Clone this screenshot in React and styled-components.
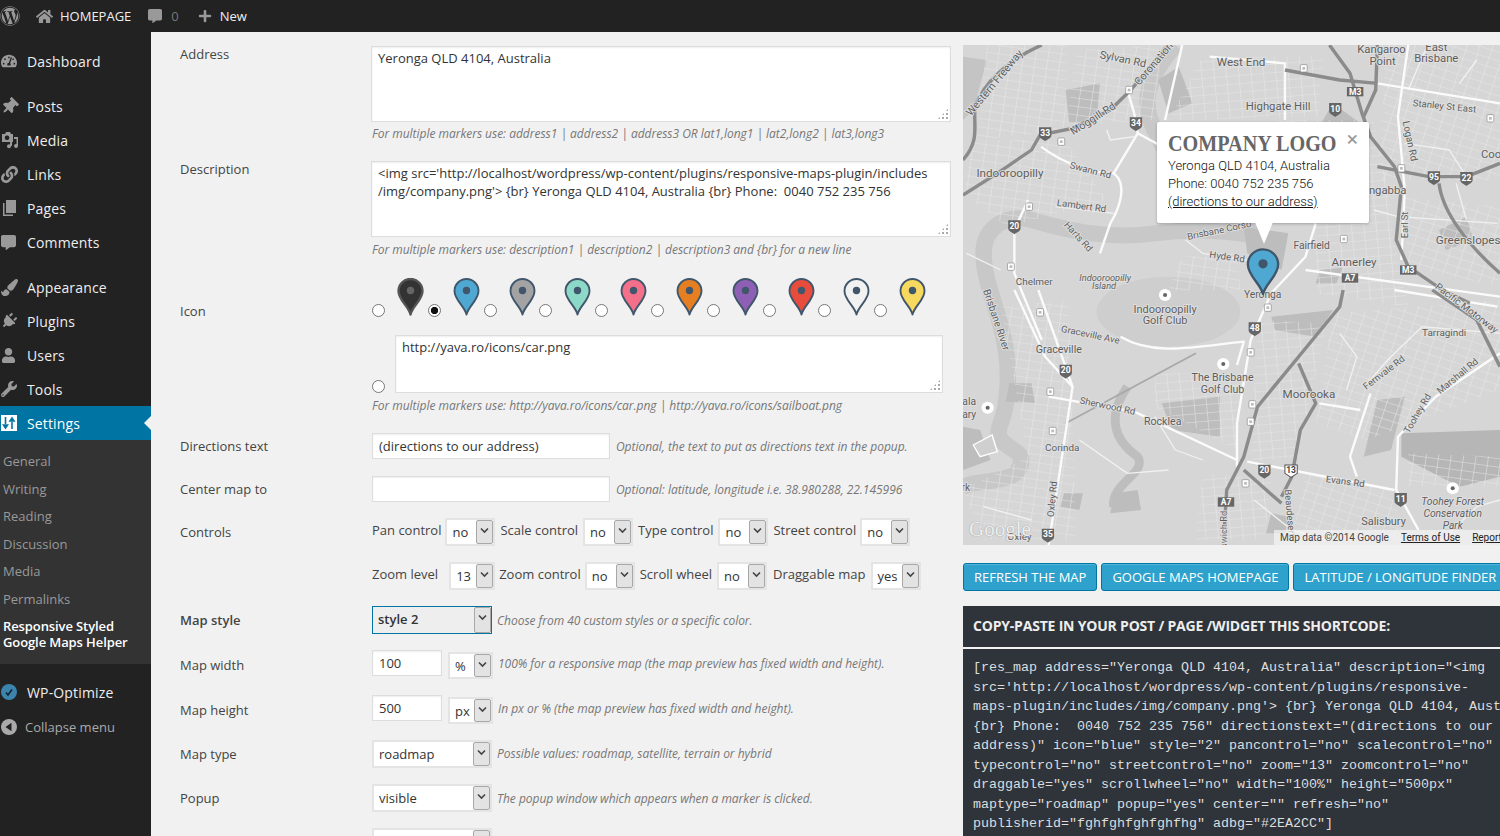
import React from "react";
import styled, { createGlobalStyle } from "styled-components";
import {
  FaWordpress, FaHome, FaCommentAlt, FaPlus, FaTachometerAlt, FaThumbtack, FaLink,
  FaPaintBrush, FaPlug, FaUser, FaWrench,
} from "react-icons/fa";

const GlobalStyle = createGlobalStyle`
  html, body { margin: 0; height: 100%; overflow: hidden; background: #f1f1f1; }
  body { font-family: "Open Sans", sans-serif; font-size: 13px; color: #444; }
  * { box-sizing: border-box; }
`;

const Page = styled.div`
  width: 1500px;
  height: 836px;
  overflow: hidden;
  display: flex;
  flex-direction: column;
`;

/* admin bar */
const AdminBar = styled.div`
  height: 32px;
  flex: none;
  background: #222;
  display: flex;
  align-items: center;
  color: #eee;
  font-size: 13px;
`;

const BarIcon = styled.span`
  display: flex;
  align-items: center;
  color: #999;
  margin-left: ${({ $ml }) => $ml}px;
`;

const BarText = styled.span`
  margin-left: ${({ $ml }) => $ml}px;
  color: ${({ $dim }) => ($dim ? "#777" : "#eee")};
`;

const Body = styled.div`
  flex: 1;
  display: flex;
  min-height: 0;
`;

/* side menu */
const Sidebar = styled.nav`
  width: 151px;
  flex: none;
  background: #222;
  padding-top: 12px;
`;

const MenuGroup = styled.div`
  margin-bottom: 11px;
`;

const MenuItem = styled.div`
  position: relative;
  height: 34px;
  display: flex;
  align-items: center;
  color: ${({ $active }) => ($active ? "#fff" : "#eee")};
  background: ${({ $active }) => ($active ? "#0074a2" : "transparent")};
  font-size: 14px;
  letter-spacing: 0.15px;
`;

const MenuIcon = styled.span`
  width: 27px;
  flex: none;
  display: flex;
  align-items: center;
  padding-left: 1px;
  color: #999;
`;

const ActiveArrow = styled.span`
  position: absolute;
  right: 0;
  top: 10px;
  border: 7px solid transparent;
  border-right-color: #f1f1f1;
  border-left-width: 0;
`;

const SubMenu = styled.div`
  background: #333;
  height: 224px;
  padding: 7px 0 0 3px;
`;

const SubItem = styled.div`
  height: 27.5px;
  line-height: 28px;
  color: #999;
  font-size: 13px;
`;

const SubCurrent = styled.div`
  margin-top: 6px;
  color: #fff;
  font-weight: 600;
  font-size: 13px;
  line-height: 16px;
  letter-spacing: -0.1px;
`;

const CollapseItem = styled(MenuItem)`
  color: #aaa;
  font-size: 13px;
  letter-spacing: 0;
  height: 35px;
`;

const CollapseIcon = styled(MenuIcon)`
  width: 25px;
`;

/* form column */
const Content = styled.main`
  flex: 1;
  display: flex;
  gap: 12px;
  padding: 14px 0 0 29px;
  min-width: 0;
`;

const Form = styled.div`
  width: 771px;
  flex: none;
`;

const Row = styled.div`
  display: grid;
  grid-template-columns: 192px 1fr;
  align-items: ${({ $center }) => ($center ? "center" : "start")};
  margin-top: ${({ $gap }) => $gap || 0}px;
`;

const Label = styled.div`
  color: #444;
  line-height: 18px;
  padding-top: ${({ $top }) => $top || 0}px;
  margin-top: ${({ $lift }) => ($lift ? "-1px" : 0)};
  font-weight: ${({ $bold }) => ($bold ? 600 : 400)};
`;

const Field = styled.div`
  display: flex;
  align-items: ${({ $top }) => ($top ? "flex-start" : "center")};
`;

const TextBox = styled.div`
  position: relative;
  margin-left: ${({ $ml }) => $ml || -1}px;
  width: ${({ $w }) => $w}px;
  height: ${({ $h }) => $h}px;
  background: #fff;
  border: 1px solid #ddd;
  box-shadow: inset 0 1px 2px rgba(0, 0, 0, 0.07);
  padding: 2px 6px;
  line-height: 18px;
  color: #333;
`;

const Grip = styled.span`
  position: absolute;
  right: 1px;
  bottom: 1px;
  width: 12px;
  height: 12px;
  background:
    radial-gradient(circle, #aaa 1px, transparent 1.2px) 0 0 / 4px 4px;
  clip-path: polygon(100% 0, 100% 100%, 0 100%);
`;

const Hint = styled.div`
  font-style: italic;
  font-size: 12px;
  line-height: 18px;
  color: #777;
  letter-spacing: -0.025px;
  margin-top: ${({ $mt }) => $mt}px;
  margin-left: ${({ $ml }) => $ml || 0}px;
  white-space: nowrap;
`;

const TextInput = styled.div`
  width: ${({ $w }) => $w}px;
  height: 26px;
  background: #fff;
  border: 1px solid #ddd;
  box-shadow: inset 0 1px 2px rgba(0, 0, 0, 0.07);
  padding: 0 6px;
  line-height: 24px;
  color: #333;
  flex: none;
`;

const SelectBox = styled.div`
  width: ${({ $w }) => $w}px;
  height: ${({ $h }) => $h}px;
  flex: none;
  display: flex;
  background: ${({ $focus }) => ($focus ? "#eee" : "#fff")};
  border: ${({ $focus }) => ($focus ? "1px solid #0074a2" : "2px solid #e4e4e4")};
  margin-left: ${({ $ml }) => $ml || 0}px;
  margin-top: ${({ $mt }) => $mt || 0}px;
  color: #333;
  font-weight: ${({ $focus }) => ($focus ? 600 : 400)};
`;

const SelectValue = styled.span`
  flex: 1;
  padding: 1px 0 0 5px;
  line-height: 22px;
`;

const SelectArrow = styled.span`
  width: 17px;
  flex: none;
  display: flex;
  justify-content: center;
  padding-top: 6px;
  background: #e3e3e3;
  border: 1px solid #a8a8a8;
  border-radius: 2px;
  color: #444;
`;

const Select = ({ w, h = 28, value, focus, ml, mt }) => (
  <SelectBox $w={w} $h={h} $focus={focus} $ml={ml} $mt={mt}>
    <SelectValue>{value}</SelectValue>
    <SelectArrow>
      <svg width="9" height="7" viewBox="0 0 9 7">
        <path d="M1 1.5 L4.5 5 L8 1.5" fill="none" stroke="currentColor" strokeWidth="1.6" />
      </svg>
    </SelectArrow>
  </SelectBox>
);

const Pins = styled.div`
  display: flex;
  height: 41px;
  align-items: flex-end;
`;

const PinOption = styled.div`
  width: 55.8px;
  flex: none;
  display: flex;
  align-items: flex-end;
  gap: 12px;
`;

const Radio = styled.input.attrs({ type: "radio", readOnly: true })`
  appearance: none;
  margin: 0;
  width: 13px;
  height: 13px;
  flex: none;
  border: 1px solid #777;
  border-radius: 50%;
  background: #fff;
  display: block;
  &:checked {
    background: radial-gradient(circle, #111 3.4px, #fff 3.9px);
  }
`;

const Pin = ({ fill, stroke = "#40566a", dot = "#40566a", w = 27, h = 38, soft }) => (
  <svg width={w} height={h} viewBox="0 0 27 38" style={{ flex: "none", marginBottom: 1 }}>
    <path
      d="M13.5 36.5 C11.5 28 1.5 22 1.5 13 A12 12 0 1 1 25.5 13 C25.5 22 15.5 28 13.5 36.5 Z"
      fill={fill}
      stroke={stroke}
      strokeWidth={soft ? 2.4 : 1.9}
      strokeLinejoin="round"
    />
    <circle cx="13.5" cy="12.5" r="3.7" fill={dot} />
  </svg>
);

const CustomIconRow = styled.div`
  display: flex;
  align-items: flex-end;
  margin-top: 18px;
  gap: 10px;
`;

const CustomBox = styled(TextBox)`
  margin-left: 0;
`;

const ControlRow = styled.div`
  display: flex;
  align-items: center;
  height: 28px;
  margin-bottom: ${({ $mb }) => $mb || 0}px;
`;

const ControlLabel = styled.span`
  margin-left: ${({ $ml }) => $ml || 0}px;
  margin-top: -4px;
  white-space: nowrap;
  color: #444;
`;

/* right column */
const Side = styled.div`
  flex: 1;
  min-width: 0;
  margin-top: -1px;
`;

const MapFrame = styled.div`
  position: relative;
  width: 537px;
  height: 500px;
  overflow: hidden;
  background: #ddd;
`;

const MapSvg = styled.svg`
  display: block;
  width: 537px;
  height: 500px;
`;

const MapLabel = styled.text`
  font-family: Roboto, sans-serif;
  font-size: ${({ $size }) => $size || 32}px;
  font-style: ${({ $italic }) => ($italic ? "italic" : "normal")};
  fill: #5e5e5e;
  stroke: #e2e2e2;
  stroke-width: 5px;
  paint-order: stroke;
  text-anchor: middle;
`;

const ShieldText = styled.text`
  font-family: Roboto, sans-serif;
  font-weight: 700;
  font-size: 25px;
  fill: ${({ $dark }) => ($dark ? "#444" : "#fff")};
  text-anchor: middle;
`;

const Popup = styled.div`
  position: absolute;
  left: 194px;
  top: 77px;
  width: 212px;
  height: 101px;
  background: #fff;
  border-radius: 2px;
  padding: 7px 11px;
  box-shadow: 0 1px 3px rgba(0, 0, 0, 0.25);
  font-family: Roboto, sans-serif;
  font-weight: 300;
  font-size: 13px;
  line-height: 18px;
  color: #111;
  &::after {
    content: "";
    position: absolute;
    left: 98px;
    top: 100px;
    border-style: solid;
    border-width: 22px 9px 0;
    border-color: #fff transparent transparent;
  }
`;

const PopupLogo = styled.div`
  font-family: "Liberation Serif", serif;
  font-weight: 700;
  font-size: 24px;
  line-height: 28px;
  color: #666;
  white-space: nowrap;
  transform: scaleX(0.84);
  transform-origin: left center;
`;

const PopupClose = styled.span`
  position: absolute;
  right: 11px;
  top: 8px;
  color: #999;
  font-size: 21px;
  line-height: 18px;
  font-weight: 400;
`;

const PopupLink = styled.div`
  text-decoration: underline;
`;

const MapPin = styled.div`
  position: absolute;
  left: 283px;
  top: 203px;
  line-height: 0;
`;

const GoogleMark = styled.span`
  position: absolute;
  left: 6px;
  bottom: 3px;
  font-family: "Liberation Serif", serif;
  font-size: 21px;
  color: rgba(255, 255, 255, 0.9);
  text-shadow: 0 0 1px #777;
`;

const Attribution = styled.div`
  position: absolute;
  right: 0;
  bottom: 0;
  width: 226px;
  height: 15px;
  padding-left: 6px;
  display: flex;
  gap: 12px;
  background: rgba(245, 245, 245, 0.7);
  font-family: Roboto, sans-serif;
  font-size: 10px;
  line-height: 15px;
  color: #444;
  white-space: nowrap;
`;

const AttributionLink = styled.span`
  color: #222;
  text-decoration: underline;
`;

const Buttons = styled.div`
  display: flex;
  gap: 4px;
  margin-top: 18px;
  white-space: nowrap;
`;

const Button = styled.div`
  height: 28px;
  padding: 0 10px;
  background: #2ea2cc;
  border: 1px solid #0074a2;
  border-radius: 3px;
  box-shadow: inset 0 1px 0 rgba(120, 200, 230, 0.5);
  color: #fff;
  font-size: 13px;
  line-height: 26px;
  flex: none;
`;

const ShortcodeHead = styled.div`
  margin-top: 15px;
  height: 41px;
  background: #2f343b;
  padding-left: 10px;
  color: #eee;
  font-weight: 700;
  font-size: 14px;
  letter-spacing: -0.2px;
  line-height: 40px;
  white-space: nowrap;
`;

const ShortcodeBody = styled.div`
  margin-top: 2px;
  height: 200px;
  background: #2f343b;
  padding: 9px 0 0 10px;
  color: #ddd;
  font-family: "Liberation Mono", monospace;
  font-size: 13.333px;
  line-height: 19.5px;
  white-space: pre;
  overflow: hidden;
`;

/* map data, in zoomed picture units (1568 x 1500 viewBox) */
const patches = [
  "300,150 400,130 390,240 310,250", "570,120 630,80 670,190 600,220",
  "1080,190 1160,250 1090,330 1040,260", "820,560 950,580 930,690 830,640",
  "900,830 1080,810 1030,890 910,870", "1210,1080 1290,1070 1250,1230 1170,1250",
  "135,1030 200,1030 210,1090 125,1085", "580,1090 750,1070 750,1190 610,1170",
  "0,1160 50,1170 80,1260 0,1290", "440,1360 510,1350 520,1410 430,1420",
  "1390,570 1470,530 1490,600 1410,630", "295,1360 350,1360 340,1410 285,1400",
  "900,1420 950,1430 940,1480 885,1480", "1040,690 1110,680 1090,730 1030,730",
];

const streetAreas = [
  { id: "gridA", points: "70,15 300,15 300,270 40,300" },
  { id: "gridA", points: "330,30 580,15 560,240 300,260" },
  { id: "gridB", points: "700,50 1050,50 1040,230 600,240" },
  { id: "gridC", points: "1230,15 1568,15 1568,150 1230,150" },
  { id: "gridC", points: "1230,150 1568,150 1568,420 1210,420" },
  { id: "gridA", points: "30,300 300,300 420,480 130,560 0,460" },
  { id: "gridB", points: "900,240 1200,240 1250,500 1000,560" },
  { id: "gridB", points: "1030,560 1240,500 1300,800 1030,760" },
  { id: "gridC", points: "1290,470 1568,500 1568,740 1300,680" },
  { id: "gridA", points: "110,800 310,780 330,1500 60,1500 0,1350 190,1250" },
  { id: "gridA", points: "640,650 800,640 810,750 600,750" },
  { id: "gridB", points: "860,840 1060,850 980,1250 840,1270" },
  { id: "gridC", points: "1080,820 1568,780 1568,1050 1180,1200 1030,1150" },
  { id: "gridB", points: "560,1000 820,1000 800,1230 560,1100" },
  { id: "gridC", points: "1000,1300 1240,1340 1300,1500 960,1500" },
  { id: "gridA", points: "1300,1240 1568,1250 1568,1340 1300,1340" },
  { id: "gridB", points: "700,1300 900,1320 880,1500 680,1500" },
];

const motorways = [
  "M230,15 C130,60 60,130 35,200 C30,260 50,300 0,360",
  "M0,465 L100,400 L200,330 L225,285 L320,265 L430,210 L490,150 L600,15",
  "M1070,15 L1130,100 L1165,220 L1190,290 L1260,380 L1280,440 L1265,600 L1300,680 L1400,750 L1480,790",
  "M940,90 L1100,120 L1210,130",
  "M1210,15 L1205,150 L1170,230",
  "M1210,380 L1360,410 L1470,410 L1568,370",
  "M1110,750 L1100,800 L980,950 L860,1100 L820,1250 L770,1350 L760,1515",
  "M980,970 L1030,1090 L985,1170 L960,1310 L930,1370",
  "M1370,750 L1500,840 L1568,980",
  "M1390,430 C1400,520 1480,620 1568,700",
  "M820,1290 L930,1390",
];

const roads = [
  "M228,320 C290,370 380,400 440,400 L510,280 L600,330",
  "M440,400 C480,430 460,500 430,550 L400,640",
  "M480,150 L500,220 L510,280",
  "M190,480 L150,570 L150,700 L230,900",
  "M150,750 L240,950 L320,1040 L250,1515",
  "M220,750 L320,1040",
  "M1030,550 L1000,650 L900,760 L840,900 L800,1150 L800,1280",
  "M250,1070 L500,1115 L800,1260",
  "M830,1265 L1260,1350",
  "M1568,940 L1380,1070 L1270,1190 L1265,1350 L1330,1470",
  "M460,890 C560,950 680,920 820,905 L800,975",
  "M1260,750 L1560,800",
  "M1300,15 L1270,230 L1290,450 L1280,660",
  "M1210,130 L1568,190",
  "M640,15 L590,240",
  "M720,50 L940,70 L940,240",
  "M1000,690 L1568,770",
  "M1190,1060 L1130,1250 L1150,1310",
  "M1040,1090 L1160,1110",
];

/* thinner side streets between the main roads */
const sideStreets = [
  "M420,270 L430,300 L500,290", "M650,600 L700,640 L830,660", "M270,500 L440,520",
  "M1200,510 L1270,530 L1560,550", "M1290,310 L1420,330 L1470,410", "M1340,860 L1240,960 L1180,1030",
  "M1340,860 L1568,880", "M1100,880 L1150,950 L1120,1050", "M560,1130 L620,1230 L700,1260",
  "M1400,1500 L1500,1400 L1568,1380", "M340,1200 L480,1300 L600,1290", "M60,1400 L200,1440",
  "M850,1380 L960,1470 L1060,1500", "M1000,280 L1130,290 L1180,330", "M1350,30 L1300,150",
  "M1450,130 L1500,60", "M10,640 L110,690", "M1440,430 L1470,540",
];

const labels = [
  ["Western Freeway", 100, 135, -51], ["Sylvan Rd", 465, 68, 12], ["Coronation", 565, 78, -50],
  ["West End", 812, 78, 0, 34], ["Kangaroo", 1222, 40, 0, 33], ["Point", 1225, 75, 0, 33],
  ["East", 1382, 32, 0, 33], ["Brisbane", 1382, 67, 0, 33], ["Highgate Hill", 920, 210, 0, 33],
  ["Stanley St East", 1405, 208, 6, 28], ["Moggill Rd", 385, 245, -33], ["Logan Rd", 1296, 305, 78, 29],
  ["Swann Rd", 370, 400, 15, 28], ["Indooroopilly", 137, 411, 0, 34], ["Lambert Rd", 345, 507, 8, 28],
  ["Harts Rd", 330, 596, 48, 28], ["Brisbane Corso", 750, 580, -12, 28], ["Hyde Rd", 770, 660, 8, 28],
  ["Fairfield", 1018, 628, 0, 30], ["Annerley", 1142, 678, 0, 34], ["Greenslopes", 1475, 611, 0, 34],
  ["Woolloongabba", 1180, 461, 0, 33], ["Coorparoo", 1590, 353, 0, 33], ["Earl St", 1298, 555, -90, 28],
  ["Chelmer", 208, 735, 0, 29], ["Indooroopilly", 415, 722, 0, 27, true], ["Island", 412, 748, 0, 27, true],
  ["Yeronga", 875, 775, 0, 30], ["Brisbane River", 88, 842, 72, 30], ["Indooroopilly", 590, 818, 0, 32],
  ["Golf Club", 590, 853, 0, 32], ["Graceville Ave", 370, 893, 12, 28], ["Graceville", 280, 938, 0, 31],
  ["The Brisbane", 758, 1024, 0, 31], ["Golf Club", 758, 1060, 0, 31], ["Moorooka", 1010, 1073, 0, 34],
  ["Tarragindi", 1405, 889, 0, 29], ["Fernvale Rd", 1235, 1005, -38, 28], ["Marshall Rd", 1450, 1015, -40, 28],
  ["Toohey Rd", 1335, 1125, -60, 28], ["Sherwood Rd", 420, 1107, 12, 28], ["Rocklea", 583, 1154, 0, 31],
  ["Corinda", 290, 1234, 0, 29], ["Oxley Rd", 270, 1378, -85, 28], ["Evans Rd", 1115, 1334, 8, 28],
  ["Beaudesert", 945, 1420, 85, 28], ["Ipswich Rd", 772, 1480, -90, 28], ["Toohey Forest", 1430, 1396, 0, 30, true],
  ["Conservation", 1430, 1432, 0, 30, true], ["Park", 1430, 1468, 0, 30, true], ["Salisbury", 1228, 1456, 0, 32],
  ["Oxley", 165, 1500, 0, 29], ["ala", 18, 1096, 0, 30], ["ary", 18, 1133, 0, 30], ["rk", 8, 1354, 0, 30],
  ["Pacific Motorway", 1465, 812, 38, 29],
];

const roundShields = [
  ["34", 505, 250], ["33", 240, 280], ["10", 1087, 207], ["20", 150, 559], ["95", 1375, 412], ["22", 1470, 414],
  ["48", 852, 865], ["20", 300, 992], ["20", 880, 1292], ["11", 1278, 1377], ["35", 248, 1484],
];
const squareShields = [["M3", 1145, 155], ["M3", 1300, 690], ["A7", 1130, 714], ["A7", 768, 1386]];
const markers = [
  [485, 150], [287, 305], [193, 500], [140, 680], [995, 85], [1112, 597], [1280, 385], [1540, 235], [890, 803],
  [225, 817], [840, 937], [845, 1093], [840, 1145], [255, 1055], [262, 1173], [825, 1330],
];
const poi = [[590, 765], [760, 972], [72, 1103], [1430, 1345]];

const GridPattern = ({ id, angle }) => (
  <pattern id={id} width="36" height="25" patternUnits="userSpaceOnUse" patternTransform={`rotate(${angle})`}>
    <path d="M0 0 H36 M0 0 V25" stroke="#e8e8e8" strokeWidth="3" fill="none" />
  </pattern>
);

const MapDrawing = () => (
  <MapSvg viewBox="0 15 1568 1500" preserveAspectRatio="none">
    <defs>
      <GridPattern id="gridA" angle={8} />
      <GridPattern id="gridB" angle={-5} />
      <GridPattern id="gridC" angle={18} />
    </defs>
    <rect x="0" y="15" width="1568" height="1500" fill="#d6d6d6" />
    <polygon points="1280,1180 1568,1170 1568,1310 1450,1340 1280,1250" fill="#b6b6b6" />
    <polygon points="0,240 30,210 70,60 0,50" fill="#c4c4c4" />
    <ellipse cx="600" cy="815" rx="210" ry="105" fill="#cecece" />
    <path
      d="M620,15 C540,110 510,190 570,290 C620,420 760,520 860,590 C820,580 700,560 560,580 C420,600 300,570 200,540 C130,520 60,560 60,640 C60,720 100,800 120,900 C140,1000 130,1100 110,1150 C80,1220 170,1220 170,1260 C170,1320 100,1320 30,1330 L0,1340"
      fill="none"
      stroke="#c8c8c8"
      strokeWidth="48"
    />
    <path d="M480,1040 C420,1130 440,1200 510,1250 C540,1300 430,1330 440,1400" fill="none" stroke="#bebebe" strokeWidth="26" />
    {patches.map((p) => (
      <polygon key={p} points={p} fill="#bdbdbd" />
    ))}
    {streetAreas.map((a, i) => (
      <polygon key={i} points={a.points} fill={`url(#${a.id})`} />
    ))}
    <polygon points="30,1215 85,1185 100,1235 50,1250" fill="#cfcfcf" stroke="#fff" strokeWidth="4" />
    <path d="M300,1150 L680,940" fill="none" stroke="#a8a8a8" strokeWidth="5" />
    {sideStreets.map((d) => (
      <path key={d} d={d} fill="none" stroke="#f1f1f1" strokeWidth="4" strokeLinejoin="round" />
    ))}
    {roads.map((d) => (
      <path key={d} d={d} fill="none" stroke="#fbfbfb" strokeWidth="7" strokeLinejoin="round" />
    ))}
    {motorways.map((d) => (
      <path key={d} d={d} fill="none" stroke="#8b8b8b" strokeWidth="10" strokeLinejoin="round" />
    ))}
    {labels.map(([text, x, y, rot, size, italic], i) => (
      <MapLabel key={i} x={x} y={y} $size={size} $italic={italic} transform={rot ? `rotate(${rot} ${x} ${y})` : undefined}>
        {text}
      </MapLabel>
    ))}
    {markers.map(([x, y]) => (
      <g key={`${x}-${y}`}>
        <rect x={x - 10} y={y - 11} width="20" height="22" rx="3" fill="#fff" stroke="#888" strokeWidth="2" />
        <rect x={x - 4} y={y - 4} width="8" height="8" fill="#bbb" />
      </g>
    ))}
    {poi.map(([x, y]) => (
      <g key={`${x}-${y}`}>
        <circle cx={x} cy={y} r="18" fill="#fff" />
        <circle cx={x} cy={y} r="6" fill="#666" />
      </g>
    ))}
    {roundShields.map(([t, x, y]) => (
      <g key={`${x}-${y}`}>
        <path d={`M${x - 18} ${y - 18} H${x + 18} V${y + 6} C${x + 18} ${y + 16} ${x + 6} ${y + 18} ${x} ${y + 24} C${x - 6} ${y + 18} ${x - 18} ${y + 16} ${x - 18} ${y + 6} Z`} fill="#666" />
        <ShieldText x={x} y={y + 8}>{t}</ShieldText>
      </g>
    ))}
    {squareShields.map(([t, x, y]) => (
      <g key={`${x}-${y}`}>
        <rect x={x - 24} y={y - 14} width="48" height="28" fill="#666" />
        <ShieldText x={x} y={y + 9}>{t}</ShieldText>
      </g>
    ))}
    <path d="M940 1275 H976 V1300 L958 1312 L940 1300 Z" fill="#fff" stroke="#555" strokeWidth="3" />
    <ShieldText $dark x="958" y="1300">13</ShieldText>
  </MapSvg>
);

const MediaIcon = () => (
  <svg width="18" height="18" viewBox="0 0 18 18" fill="currentColor">
    <path d="M1 3 H4 L5 1 H9 L10 3 H12 V11 H1 Z M6.5 4.5 A2.3 2.3 0 1 0 6.6 9 A2.3 2.3 0 0 0 6.5 4.5 Z" fillRule="evenodd" />
    <path d="M13 6 H17 V15 A2 2 0 1 1 15.5 13 V8 H13 Z" />
    <circle cx="8" cy="15.3" r="2" />
    <path d="M9 10 H11 V15 H9 Z" />
  </svg>
);

const PagesIcon = () => (
  <svg width="16" height="16" viewBox="0 0 16 16" fill="currentColor">
    <path d="M5 0 H15 V13 H5 Z" />
    <path d="M2 3 H3.5 V14.5 H12 V16 H2 Z" />
  </svg>
);

const SettingsIcon = () => (
  <svg width="16" height="16" viewBox="0 0 16 16">
    <rect width="16" height="16" fill="#fff" />
    <path d="M4.5 2 V9 M2.5 10 H6.5 L4.5 13 Z M11 14 V7 M9 6 H13 L11 3 Z" stroke="#0074a2" strokeWidth="1.6" fill="#0074a2" />
  </svg>
);

const OptimizeIcon = () => (
  <svg width="16" height="16" viewBox="0 0 16 16">
    <circle cx="8" cy="8" r="8" fill="#3a84ad" />
    <path d="M5 8.5 L7 11 L11 5.5" fill="none" stroke="#14232e" strokeWidth="1.6" />
  </svg>
);

const CollapseGlyph = () => (
  <svg width="16" height="16" viewBox="0 0 16 16">
    <circle cx="8" cy="8" r="8" fill="#aaa" />
    <path d="M10.5 3.8 V12.2 L4.5 8 Z" fill="#222" />
  </svg>
);

const topMenu = [
  [<FaThumbtack size={17} style={{ transform: "rotate(45deg)" }} />, "Posts"],
  [<MediaIcon />, "Media"],
  [<FaLink size={17} />, "Links"],
  [<PagesIcon />, "Pages"],
  [<FaCommentAlt size={15} />, "Comments"],
];

const adminMenu = [
  [<FaPaintBrush size={17} />, "Appearance"],
  [<FaPlug size={16} style={{ transform: "rotate(45deg)" }} />, "Plugins"],
  [<FaUser size={15} />, "Users"],
  [<FaWrench size={16} />, "Tools"],
];

const subItems = ["General", "Writing", "Reading", "Discussion", "Media", "Permalinks"];

const pinColours = ["#4fa8d2", "#a3a3a3", "#8cd9c8", "#f4708a", "#e67e22", "#8e60b5", "#e84c3d", "#f1f1f1", "#f7d95f"];

const codeLines = [
  `[res_map address="Yeronga QLD 4104, Australia" description="<img`,
  `src='http://localhost/wordpress/wp-content/plugins/responsive-`,
  `maps-plugin/includes/img/company.png'> {br} Yeronga QLD 4104, Australia`,
  `{br} Phone:  0040 752 235 756" directionstext="(directions to our`,
  `address)" icon="blue" style="2" pancontrol="no" scalecontrol="no"`,
  `typecontrol="no" streetcontrol="no" zoom="13" zoomcontrol="no"`,
  `draggable="yes" scrollwheel="no" width="100%" height="500px"`,
  `maptype="roadmap" popup="yes" center="" refresh="no"`,
  `publisherid="fghfghfghfghfhg" adbg="#2EA2CC"]`,
].join("\n");

const App = () => (
  <Page>
    <GlobalStyle />
    <AdminBar>
      <BarIcon $ml={0}><FaWordpress size={20} /></BarIcon>
      <BarIcon $ml={16}><FaHome size={17} /></BarIcon>
      <BarText $ml={7}>HOMEPAGE</BarText>
      <BarIcon $ml={17}><FaCommentAlt size={14} /></BarIcon>
      <BarText $ml={9} $dim>0</BarText>
      <BarIcon $ml={19}><FaPlus size={14} /></BarIcon>
      <BarText $ml={8}>New</BarText>
    </AdminBar>
    <Body>
      <Sidebar>
        <MenuGroup>
          <MenuItem>
            <MenuIcon><FaTachometerAlt size={16} /></MenuIcon>
            Dashboard
          </MenuItem>
        </MenuGroup>
        <MenuGroup>
          {topMenu.map(([icon, name]) => (
            <MenuItem key={name}>
              <MenuIcon>{icon}</MenuIcon>
              {name}
            </MenuItem>
          ))}
        </MenuGroup>
        {adminMenu.map(([icon, name]) => (
          <MenuItem key={name}>
            <MenuIcon>{icon}</MenuIcon>
            {name}
          </MenuItem>
        ))}
        <MenuItem $active>
          <MenuIcon><SettingsIcon /></MenuIcon>
          Settings
          <ActiveArrow />
        </MenuItem>
        <SubMenu>
          {subItems.map((s) => (
            <SubItem key={s}>{s}</SubItem>
          ))}
          <SubCurrent>
            Responsive Styled
            <br />
            Google Maps Helper
          </SubCurrent>
        </SubMenu>
        <MenuGroup />
        <MenuItem>
          <MenuIcon><OptimizeIcon /></MenuIcon>
          WP-Optimize
        </MenuItem>
        <CollapseItem>
          <CollapseIcon><CollapseGlyph /></CollapseIcon>
          Collapse menu
        </CollapseItem>
      </Sidebar>

      <Content>
        <Form>
          <Row>
            <Label $lift>Address</Label>
            <div>
              <TextBox $w={580} $h={76}>
                Yeronga QLD 4104, Australia
                <Grip />
              </TextBox>
              <Hint $mt={3}>For multiple markers use: address1 | address2 | address3 OR lat1,long1 | lat2,long2 | lat3,long3</Hint>
            </div>
          </Row>
          <Row $gap={18}>
            <Label $lift>Description</Label>
            <div>
              <TextBox $w={580} $h={76}>
                &lt;img src='http://localhost/wordpress/wp-content/plugins/responsive-maps-plugin/includes
                <br />
                /img/company.png'&gt; {"{br}"} Yeronga QLD 4104, Australia {"{br}"} Phone:&nbsp; 0040 752 235 756
                <Grip />
              </TextBox>
              <Hint $mt={4}>For multiple markers use: description1 | description2 | description3 and {"{br}"} for a new line</Hint>
            </div>
          </Row>
          <Row $gap={17}>
            <Label $top={26}>Icon</Label>
            <div>
              <Pins>
                <PinOption>
                  <Radio />
                  <Pin fill="#333" stroke="#555" dot="#666" soft />
                </PinOption>
                {pinColours.map((c, i) => (
                  <PinOption key={c}>
                    <Radio defaultChecked={i === 0} />
                    <Pin fill={c} />
                  </PinOption>
                ))}
              </Pins>
              <CustomIconRow>
                <Radio />
                <CustomBox $w={548} $h={58}>
                  http://yava.ro/icons/car.png
                  <Grip />
                </CustomBox>
              </CustomIconRow>
              <Hint $mt={4}>For multiple markers use: http://yava.ro/icons/car.png | http://yava.ro/icons/sailboat.png</Hint>
            </div>
          </Row>
          <Row $gap={18} $center>
            <Label>Directions text</Label>
            <Field>
              <TextInput $w={238}>(directions to our address)</TextInput>
              <Hint $mt={1} $ml={6}>Optional, the text to put as directions text in the popup.</Hint>
            </Field>
          </Row>
          <Row $gap={17} $center>
            <Label>Center map to</Label>
            <Field>
              <TextInput $w={238} />
              <Hint $mt={1} $ml={6}>Optional: latitude, longitude i.e. 38.980288, 22.145996</Hint>
            </Field>
          </Row>
          <Row $gap={16}>
            <Label $top={5}>Controls</Label>
            <div>
              <ControlRow $mb={16}>
                <ControlLabel>Pan control</ControlLabel>
                <Select w={50} value="no" ml={4} />
                <ControlLabel $ml={5}>Scale control</ControlLabel>
                <Select w={50} value="no" ml={5} />
                <ControlLabel $ml={5}>Type control</ControlLabel>
                <Select w={50} value="no" ml={5} />
                <ControlLabel $ml={5}>Street control</ControlLabel>
                <Select w={50} value="no" ml={4} />
              </ControlRow>
              <ControlRow>
                <ControlLabel>Zoom level</ControlLabel>
                <Select w={46} value="13" ml={11} />
                <ControlLabel $ml={4}>Zoom control</ControlLabel>
                <Select w={50} value="no" ml={4} />
                <ControlLabel $ml={5}>Scroll wheel</ControlLabel>
                <Select w={50} value="no" ml={5} />
                <ControlLabel $ml={6}>Draggable map</ControlLabel>
                <Select w={50} value="yes" ml={5} />
              </ControlRow>
            </div>
          </Row>
          <Row $gap={16} $center>
            <Label $bold>Map style</Label>
            <Field>
              <Select w={120} value="style 2" focus />
              <Hint $mt={1} $ml={5}>Choose from 40 custom styles or a specific color.</Hint>
            </Field>
          </Row>
          <Row $gap={16} $center>
            <Label>Map width</Label>
            <Field $top>
              <TextInput $w={70}>100</TextInput>
              <Select w={45} h={27} value="%" ml={6} mt={2} />
              <Hint $mt={5} $ml={5}>100% for a responsive map (the map preview has fixed width and height).</Hint>
            </Field>
          </Row>
          <Row $gap={16} $center>
            <Label>Map height</Label>
            <Field $top>
              <TextInput $w={70}>500</TextInput>
              <Select w={45} h={27} value="px" ml={6} mt={2} />
              <Hint $mt={5} $ml={5}>In px or % (the map preview has fixed width and height).</Hint>
            </Field>
          </Row>
          <Row $gap={16} $center>
            <Label>Map type</Label>
            <Field>
              <Select w={120} value="roadmap" />
              <Hint $mt={-1} $ml={5}>Possible values: roadmap, satellite, terrain or hybrid</Hint>
            </Field>
          </Row>
          <Row $gap={16} $center>
            <Label>Popup</Label>
            <Field>
              <Select w={120} value="visible" />
              <Hint $mt={1} $ml={5}>The popup window which appears when a marker is clicked.</Hint>
            </Field>
          </Row>
          <Row $gap={16} $center>
            <Label />
            <Field>
              <Select w={120} value="" />
            </Field>
          </Row>
        </Form>

        <Side>
          <MapFrame>
            <MapDrawing />
            <Popup>
              <PopupLogo>COMPANY LOGO</PopupLogo>
              <PopupClose>×</PopupClose>
              <div>Yeronga QLD 4104, Australia</div>
              <div>Phone: 0040 752 235 756</div>
              <PopupLink>(directions to our address)</PopupLink>
            </Popup>
            <MapPin>
              <Pin fill="#4fa8d2" w={34} h={48} />
            </MapPin>
            <GoogleMark>Google</GoogleMark>
            <Attribution>
              <span>Map data ©2014 Google</span>
              <AttributionLink>Terms of Use</AttributionLink>
              <AttributionLink>Report a map error</AttributionLink>
            </Attribution>
          </MapFrame>
          <Buttons>
            <Button>REFRESH THE MAP</Button>
            <Button>GOOGLE MAPS HOMEPAGE</Button>
            <Button>LATITUDE / LONGITUDE FINDER TOOL</Button>
          </Buttons>
          <ShortcodeHead>COPY-PASTE IN YOUR POST / PAGE /WIDGET THIS SHORTCODE:</ShortcodeHead>
          <ShortcodeBody>{codeLines}</ShortcodeBody>
        </Side>
      </Content>
    </Body>
  </Page>
);

export default App;
